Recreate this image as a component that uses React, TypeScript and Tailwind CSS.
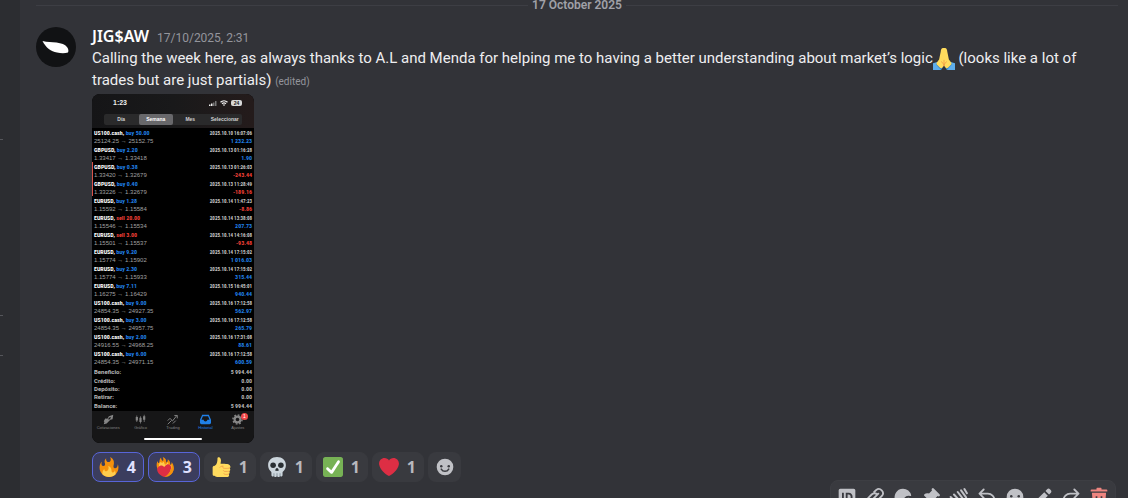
import type { ReactNode } from "react";

type Trade = {
  symbol: string;
  side: "buy" | "sell";
  volume: string;
  time: string;
  open: string;
  close: string;
  profit: string;
  stopped?: boolean;
};

const trades: Trade[] = [
  { symbol: "US100.cash", side: "buy", volume: "50.00", time: "2025.10.10 16:07:06", open: "25124.25", close: "25152.75", profit: "1 232.23" },
  { symbol: "GBPUSD", side: "buy", volume: "2.20", time: "2025.10.13 01:16:28", open: "1.33417", close: "1.33418", profit: "1.90" },
  { symbol: "GBPUSD", side: "buy", volume: "0.38", time: "2025.10.13 01:26:03", open: "1.33420", close: "1.32679", profit: "-243.44", stopped: true },
  { symbol: "GBPUSD", side: "buy", volume: "0.40", time: "2025.10.13 11:28:49", open: "1.33226", close: "1.32679", profit: "-189.16", stopped: true },
  { symbol: "EURUSD", side: "buy", volume: "1.28", time: "2025.10.14 11:47:23", open: "1.15592", close: "1.15584", profit: "-8.86" },
  { symbol: "EURUSD", side: "sell", volume: "20.00", time: "2025.10.14 13:38:08", open: "1.15546", close: "1.15534", profit: "207.73" },
  { symbol: "EURUSD", side: "sell", volume: "3.00", time: "2025.10.14 14:16:08", open: "1.15501", close: "1.15537", profit: "-93.48" },
  { symbol: "EURUSD", side: "buy", volume: "9.20", time: "2025.10.14 17:15:02", open: "1.15774", close: "1.15902", profit: "1 016.03" },
  { symbol: "EURUSD", side: "buy", volume: "2.30", time: "2025.10.14 17:15:02", open: "1.15774", close: "1.15933", profit: "315.44" },
  { symbol: "EURUSD", side: "buy", volume: "7.11", time: "2025.10.15 16:45:01", open: "1.16275", close: "1.16429", profit: "940.44" },
  { symbol: "US100.cash", side: "buy", volume: "9.00", time: "2025.10.16 17:12:58", open: "24854.35", close: "24927.35", profit: "562.97" },
  { symbol: "US100.cash", side: "buy", volume: "3.00", time: "2025.10.16 17:12:58", open: "24854.35", close: "24957.75", profit: "265.79" },
  { symbol: "US100.cash", side: "buy", volume: "2.00", time: "2025.10.16 17:31:08", open: "24916.55", close: "24968.25", profit: "88.61" },
  { symbol: "US100.cash", side: "buy", volume: "6.00", time: "2025.10.16 17:12:58", open: "24854.35", close: "24971.15", profit: "600.59" },
];

const totals = [
  ["Beneficio:", "5 994.44"],
  ["Crédito:", "0.00"],
  ["Depósito:", "0.00"],
  ["Retirar:", "0.00"],
  ["Balance:", "5 994.44"],
];

function Fire() {
  return (
    <svg viewBox="0 0 36 36" className="size-5" aria-hidden="true">
      <path fill="#F4900C" d="M35 19c0-2.062-.367-4.039-1.04-5.868-.46 5.389-3.333 8.157-6.335 6.868-2.812-1.208-.917-5.917-.777-8.164.236-3.809-.012-8.169-6.931-11.794 2.875 5.5.333 8.917-2.333 9.125-2.958.231-5.667-2.542-4.667-7.042-3.238 2.386-3.332 6.402-2.333 9 1.042 2.708-.042 4.958-2.583 5.208-2.84.28-4.418-3.041-2.963-8.333C2.52 10.965 1 14.805 1 19c0 9.389 7.611 17 17 17s17-7.611 17-17z" />
      <path fill="#FFCC4D" d="M28.394 23.999c.148 3.084-2.561 4.293-4.019 3.709-2.106-.843-1.541-2.291-2.083-5.291s-2.625-5.083-5.708-6c2.25 6.333-1.247 8.667-3.08 9.084-1.872.426-3.753-.001-3.968-4.007C7.352 23.668 6 26.676 6 30c0 .368.023.73.055 1.09C9.125 34.124 13.342 36 18 36s8.875-1.876 11.945-4.91c.032-.36.055-.722.055-1.09 0-2.187-.584-4.236-1.606-6.001z" />
    </svg>
  );
}

function HeartOnFire() {
  return (
    <svg viewBox="0 0 36 36" className="size-5" aria-hidden="true">
      <path fill="#F4900C" d="M4 20C2 14 3 10 5 7c0 3 1 4 2 4 2-2 0-6 4-10 0 3 1 5 3 6 2-1 1-4 0-7 5 2 7 6 6 10 3-1 3-4 3-6 4 3 5 6 4 10 2 0 3-2 3-5 4 5 5 11 3 16-2 6-8 10-14 11C11 34 6 28 4 20z" />
      <path fill="#FFCC4D" d="M7 17c0-4 1-6 3-8 2 2 4 2 5-1 2 2 2 4 3 6 3-1 4-3 5-5 2 3 0 5 2 7 2 0 3-1 4-2 2 6-1 13-6 17H14C9 27 7 23 7 17z" />
      <path fill="#DD2E44" d="M29 18c-1-4-5-6-8-4-2 1-3 2-4 4-3-3-7-4-10-1-3 2-4 6-2 10 2 4 7 8 12 9 6-3 12-10 12-18z" />
      <path fill="#F4900C" d="M23 35c5-2 9-6 10-11 1-3 0-6-1-8-1 4-3 6-5 8 1 4-1 8-4 11z" />
    </svg>
  );
}

function ThumbsUp() {
  return (
    <svg viewBox="0 0 36 36" className="size-5" aria-hidden="true">
      <path fill="#FFDB5E" d="M34.956 17.916c0-.503-.12-.975-.321-1.404-1.341-4.326-7.619-4.01-16.549-4.221-1.493-.035-.639-1.798-.115-5.668.341-2.517-1.282-6.382-4.01-6.382-4.498 0-.171 3.548-4.148 12.322-2.125 4.688-6.875 2.062-6.875 6.771v10.719c0 1.833.18 3.595 2.758 3.885C8.195 34.219 7.633 36 11.238 36h18.044c1.838 0 3.333-1.496 3.333-3.334 0-.762-.267-1.456-.698-2.018 1.02-.571 1.72-1.649 1.72-2.899 0-.76-.266-1.454-.696-2.015 1.023-.57 1.725-1.649 1.725-2.901 0-.909-.368-1.733-.961-2.336.757-.611 1.251-1.535 1.251-2.581z" />
      <path fill="none" stroke="#EE9547" strokeWidth="1.3" strokeLinecap="round" d="M34 19c-1 1-2 1.500-4 1.500h-5.500c-3 0-4-1.500-3-4M33 25.200c-1 .7-2 .8-3.500.8H25c-1.500 0-2.300-.6-2.600-1.600M31.500 30.700c-.8.5-1.600.6-2.500.6h-3.500c-1.300 0-2-.5-2.300-1.300M21 16.500c-2 0-4 .500-5 2" />
    </svg>
  );
}

function Skull() {
  return (
    <svg viewBox="0 0 36 36" className="size-5" aria-hidden="true">
      <path fill="#CCD6DD" d="M18 0C8.500 0 2 6 2 14.500c0 4 1.200 7 3 9.500 1.500 2 3 2.500 3 4.500v4c0 1.700 1 2.700 2.300 2.700s2-1 2.200-1c.4.800 1.200 1.800 2.700 1.800s2.200-1 2.800-1.800c.6.800 1.300 1.800 2.800 1.800s2.300-1 2.700-1.800c.2 0 .9 1 2.200 1s2.300-1 2.300-2.700v-4c0-2 1.500-2.500 3-4.500 1.800-2.500 3-5.500 3-9.500C34 6 27.500 0 18 0z" />
      <g fill="#292F33">
        <circle cx="11" cy="15" r="5" />
        <circle cx="25" cy="15" r="5" />
        <path d="M18 20c-1.500 0-3 2.500-3 3.700 0 1 .8 1.300 1.500 1.300.8 0 1-.4 1.500-.4s.7.400 1.500.4c.7 0 1.500-.3 1.500-1.300C21 22.500 19.500 20 18 20z" />
      </g>
      <path stroke="#66757F" strokeWidth="1.200" strokeLinecap="round" d="M12.500 30v4M18 30v4M23.500 30v4" />
    </svg>
  );
}

function CheckBox() {
  return (
    <svg viewBox="0 0 36 36" className="size-5" aria-hidden="true">
      <path fill="#77B255" d="M36 32c0 2.209-1.791 4-4 4H4c-2.209 0-4-1.791-4-4V4c0-2.209 1.791-4 4-4h28c2.209 0 4 1.791 4 4v28z" />
      <path fill="#FFF" d="M29.28 6.362c-1.156-.751-2.704-.422-3.458.736L14.936 23.877l-5.029-4.65c-1.014-.938-2.596-.875-3.533.138-.937 1.014-.875 2.596.139 3.533l7.209 6.666c.48.445 1.09.665 1.696.665.673 0 1.534-.282 2.099-1.139.332-.506 12.5-19.27 12.5-19.27.751-1.159.421-2.707-.737-3.458z" />
    </svg>
  );
}

function Heart() {
  return (
    <svg viewBox="0 0 36 36" className="size-5" aria-hidden="true">
      <path fill="#DD2E44" d="M35.885 11.833c0-5.45-4.418-9.868-9.867-9.868-3.308 0-6.227 1.633-8.018 4.129-1.791-2.496-4.71-4.129-8.017-4.129-5.45 0-9.868 4.417-9.868 9.868 0 .772.098 1.52.266 2.241C1.751 22.587 11.216 31.568 18 34.034c6.783-2.466 16.249-11.447 17.617-19.959.17-.721.268-1.469.268-2.242z" />
    </svg>
  );
}

function FoldedHands() {
  return (
    <svg viewBox="0 0 36 36" className="-my-1 inline-block size-[22px] align-middle" role="img" aria-label="Folded hands">
      <path fill="#5DADEC" d="M0 25l7-2 8 8-2 5H0zM36 25l-7-2-8 8 2 5h13z" />
      <path fill="#3B88C3" d="M7 23l9 9-3 4-8-9zM29 23l-9 9 3 4 8-9z" />
      <path fill="#FFDC5D" d="M16.500 0C13.500 0 13 3 12.600 6L10 19l-4 5c-.8 1.500 0 3 1 4l4.500 4.500c1.500 1 3 1 4-.500L18 29l2.500 3c1 1.500 2.500 1.500 4 .500L29 28c1-1 1.800-2.500 1-4l-4-5-2.600-13C23 3 22.500 0 19.500 0z" />
      <path fill="none" stroke="#EF9645" strokeWidth="1.200" strokeLinecap="round" d="M18 20v9M14 22.500c1.500 1 3 3 4 6.500 1-3.500 2.500-5.500 4-6.500" />
    </svg>
  );
}

function Smiley() {
  return (
    <svg viewBox="0 0 24 24" className="size-5" aria-hidden="true">
      <circle cx="12" cy="12" r="10" fill="currentColor" />
      <g className="text-[#393a3f]">
        <circle cx="7.500" cy="11" r="1.500" fill="currentColor" />
        <circle cx="16.500" cy="11" r="1.500" fill="currentColor" />
        <path d="M7.500 14.500c2 3.600 7 3.600 9 0" fill="none" stroke="currentColor" strokeWidth="1.800" strokeLinecap="round" />
      </g>
    </svg>
  );
}

const reactions = [
  { label: "Fire", count: 4, mine: true, icon: <Fire /> },
  { label: "Heart on fire", count: 3, mine: true, icon: <HeartOnFire /> },
  { label: "Thumbs up", count: 1, mine: false, icon: <ThumbsUp /> },
  { label: "Skull", count: 1, mine: false, icon: <Skull /> },
  { label: "Check mark", count: 1, mine: false, icon: <CheckBox /> },
  { label: "Heart", count: 1, mine: false, icon: <Heart /> },
];

function Glyph({ children }: { children: ReactNode }) {
  return (
    <svg viewBox="0 0 24 24" className="size-5" fill="currentColor" aria-hidden="true">
      {children}
    </svg>
  );
}

const actions = [
  {
    label: "Copy message ID",
    icon: (
      <Glyph>
        <path fillRule="evenodd" d="M4 2h16a2 2 0 0 1 2 2v16a2 2 0 0 1-2 2H4a2 2 0 0 1-2-2V4a2 2 0 0 1 2-2ZM6 7v10h2.200V7H6Zm4.500 0v10H14c3 0 4.700-2 4.700-5S17 7 14 7h-3.500Zm2.200 2h1.200c1.700 0 2.500 1.100 2.500 3s-.8 3-2.500 3h-1.200V9Z" />
      </Glyph>
    ),
  },
  {
    label: "Copy link",
    icon: (
      <Glyph>
        <path fill="none" stroke="currentColor" strokeWidth="2.200" strokeLinecap="round" d="M9 15l7-7M11 6l2.500-2.500a5 5 0 0 1 7 7L16 15a5 5 0 0 1-6 .8M13 18l-2.500 2.500a5 5 0 0 1-7-7L8 9a5 5 0 0 1 6-.8" />
      </Glyph>
    ),
  },
  {
    label: "Mark unread",
    icon: (
      <Glyph>
        <path d="M12 2a10 10 0 0 1 9.800 8c.1.600-.3 1-.9.900a7 7 0 0 0-8.300 9.900c.3.600-.1 1.200-.8 1.200H3.200c-.8 0-1.300-.7-1-1.500l1.300-3.200A10 10 0 0 1 12 2Z" />
        <circle cx="18.500" cy="17.500" r="4.500" />
      </Glyph>
    ),
  },
  {
    label: "Pin message",
    icon: (
      <Glyph>
        <path d="M13.200 1.800a1.500 1.500 0 0 1 2.100 0l6.900 6.900a1.500 1.500 0 0 1-1.600 2.500l-.7-.3-3.600 3.600c.6 2.300.2 4.300-1.200 5.700a1 1 0 0 1-1.400 0l-3.900-3.900-5.400 5.400a1.400 1.400 0 0 1-2-2l5.400-5.400-3.900-3.900a1 1 0 0 1 0-1.400c1.400-1.400 3.400-1.800 5.700-1.200l3.600-3.600-.3-.7a1.500 1.500 0 0 1 .3-1.700Z" />
      </Glyph>
    ),
  },
  {
    label: "Apps",
    icon: (
      <Glyph>
        <path fill="none" stroke="currentColor" strokeWidth="2.400" strokeLinecap="round" d="M2 12l9 9M6 9l9 10M10.500 6l8 10.500M14.500 4l6 8.500M18.500 2.500l3 5" />
      </Glyph>
    ),
  },
  {
    label: "Reply",
    icon: (
      <Glyph>
        <path fill="none" stroke="currentColor" strokeWidth="2.200" strokeLinecap="round" strokeLinejoin="round" d="M8 3L3 8l5 5M3.500 8H13a8 8 0 0 1 8 8v4" />
      </Glyph>
    ),
  },
  { label: "React to message", icon: <Smiley /> },
  {
    label: "Edit",
    icon: (
      <Glyph>
        <path d="M13.500 6.200l4.300 4.300L8 20.300c-.3.300-.7.500-1.200.6L3 21.900a.8.800 0 0 1-.9-.9l1-3.800c.1-.5.3-.9.6-1.200l9.800-9.800ZM15 4.700l1.900-1.900a2.500 2.500 0 0 1 3.500 0l.8.800a2.500 2.500 0 0 1 0 3.500L19.300 9 15 4.700Z" />
      </Glyph>
    ),
  },
  {
    label: "Forward",
    icon: (
      <Glyph>
        <path fill="none" stroke="currentColor" strokeWidth="2.200" strokeLinecap="round" strokeLinejoin="round" d="M16 3l5 5-5 5M20.500 8H11a8 8 0 0 0-8 8v4" />
      </Glyph>
    ),
  },
  {
    label: "Delete",
    danger: true,
    icon: (
      <Glyph>
        <path d="M14.300 1c.4 0 .7.300.7.700V3h6a1 1 0 0 1 1 1v1.500H2V4a1 1 0 0 1 1-1h6V1.700c0-.4.300-.7.700-.7h4.600Z" />
        <path fillRule="evenodd" d="M3.500 7h17l-1.100 13.200A3 3 0 0 1 16.400 23H7.600a3 3 0 0 1-3-2.800L3.500 7ZM8 11v8h2v-8H8Zm6 0v8h2v-8h-2Z" />
      </Glyph>
    ),
  },
];

const phoneTabs = [
  {
    label: "Cotizaciones",
    icon: <path fill="currentColor" d="M1 10l2-4 3 .5L8 3l6-2-1 6-3 1-2 2-3 3-4 1 1-3zM8 5l-1 2.500L9.500 7 11 4z" fillRule="evenodd" />,
  },
  {
    label: "Gráfico",
    icon: (
      <g fill="currentColor">
        <path d="M1 4h3v5H1zM6 5h3v6H6zM11 3h3v5h-3z" />
        <path d="M2 2h1v9H2zM7 3h1v10H7zM12 1h1v10h-1z" />
      </g>
    ),
  },
  {
    label: "Trading",
    icon: <path fill="none" stroke="currentColor" strokeWidth="1.300" d="M1 14l5-5M5 7l2.500 2.500L13.500 2M10 2h4v4M1 9l3-3 1.500 1.500M8 13l4-4" />,
  },
  {
    label: "Historial",
    active: true,
    icon: (
      <path fill="currentColor" fillRule="evenodd" d="M3 1h9l3 7v4a2 2 0 0 1-2 2H2a2 2 0 0 1-2-2V8l3-7zM4 3L2 8h3c0 3 5 3 5 0h3l-2-5z" />
    ),
  },
  {
    label: "Ajustes",
    badge: "1",
    icon: (
      <g>
        <circle cx="7.500" cy="7.500" r="4" fill="none" stroke="currentColor" strokeWidth="3" />
        <circle cx="7.500" cy="7.500" r="6.200" fill="none" stroke="currentColor" strokeWidth="2" strokeDasharray="2.400 2.400" />
      </g>
    ),
  },
];

function PhoneScreenshot() {
  return (
    <div className="flex w-[162px] flex-col overflow-hidden rounded-lg bg-black font-['Liberation_Sans',sans-serif]">
      <div className="bg-linear-to-r from-[#151517] via-[#19191a] to-[#241b1b] px-3 pb-[3px]">
        <div className="flex h-[18px] items-center justify-between pl-[9px] text-[7px] font-bold text-[#eeeeee]">
          <span>1:23</span>
          <div className="flex items-center gap-[3px]">
            <svg viewBox="0 0 16 10" className="h-[5px] w-2" aria-hidden="true">
              <path fill="#eee" d="M0 7h3v3H0zM4 5h3v5H4z" />
              <path fill="#777" d="M8 3h3v7H8zM12 0h3v10h-3z" />
            </svg>
            <svg viewBox="0 0 16 12" className="h-[6px] w-2" aria-hidden="true">
              <path fill="none" stroke="#eee" strokeWidth="2.400" d="M1 4.500c4-4 10-4 14 0M4 7.500c2.500-2 5.500-2 8 0" />
              <path fill="#eee" d="M8 12L5.500 9.500c1.500-1 3.500-1 5 0z" />
            </svg>
            <span className="flex h-[6px] w-[11px] items-center justify-center rounded-xs bg-[#d8d8d8] text-[5px] leading-none text-[#222222]">24</span>
          </div>
        </div>
        <div className="mt-[2px] grid h-[11px] grid-cols-4 rounded-xs bg-[#2a2a2b] text-[5px] font-bold text-[#d0d0d0]">
          <button type="button" className="leading-none">Día</button>
          <button type="button" className="rounded-xs bg-[#68686b] leading-none text-white">Semana</button>
          <button type="button" className="leading-none">Mes</button>
          <button type="button" className="leading-none">Seleccionar</button>
        </div>
      </div>
      <ul>
        {trades.map((t, i) => (
          <li
            key={i}
            className={
              t.stopped
                ? "border-l border-[#d9534a] pr-[2px] text-[6px] leading-[8px]"
                : "border-l border-black pr-[2px] text-[6px] leading-[8px]"
            }
          >
            <div className="flex h-[9px] items-center justify-between pl-px font-['Roboto_Condensed',Roboto,sans-serif] font-bold">
              <span className="text-white">
                {t.symbol}, <span className={t.side === "buy" ? "text-[#2080e8]" : "text-[#f04038]"}>{t.side} {t.volume}</span>
              </span>
              <time className="text-[5px] text-[#c8c8c8]">{t.time}</time>
            </div>
            <div className="flex h-2 items-center justify-between pl-px">
              <span className="text-[#a0a0a0]">{t.open} → {t.close}</span>
              <span className={t.profit.startsWith("-") ? "font-['Roboto_Condensed',Roboto,sans-serif] font-bold text-[#f04038]" : "font-['Roboto_Condensed',Roboto,sans-serif] font-bold text-[#2080e8]"}>
                {t.profit}
              </span>
            </div>
          </li>
        ))}
      </ul>
      <dl className="flex h-[45px] flex-col px-[2px] pt-[2px] pb-px font-['Roboto',sans-serif] text-[6px] leading-[8px] font-bold text-[#b8b8b8]">
        {totals.map(([label, value]) => (
          <div key={label} className="flex flex-1 items-center justify-between">
            <dt>{label}</dt>
            <dd className="font-['Roboto_Condensed',Roboto,sans-serif]">{value}</dd>
          </div>
        ))}
      </dl>
      <div className="bg-[#161617] py-[3px]">
        <div className="grid grid-cols-5">
          {phoneTabs.map((tab) => (
            <button
              key={tab.label}
              type="button"
              className={
                tab.active
                  ? "relative flex flex-col items-center text-[4px] leading-[5px] text-[#2080e8]"
                  : "relative flex flex-col items-center text-[4px] leading-[5px] text-[#858585]"
              }
            >
              <svg viewBox="0 0 15 15" className="size-[11px]" aria-hidden="true">{tab.icon}</svg>
              <span>{tab.label}</span>
              {tab.badge && (
                <span className="absolute -top-px right-[6px] flex size-[7px] items-center justify-center rounded-full bg-[#f04848] text-[5px] leading-none text-white">
                  {tab.badge}
                </span>
              )}
            </button>
          ))}
        </div>
        <div className="mx-auto mt-2 h-[2px] w-[58px] rounded-full bg-white" />
      </div>
    </div>
  );
}

export default function App() {
  return (
    <div className="relative flex h-screen overflow-hidden bg-[#323338] font-['Noto_Sans','Open_Sans',sans-serif]">
      <aside className="flex w-5 shrink-0 flex-col bg-[#2c2d31]">
        <span className="mt-[139px] h-px w-[3px] bg-[#55565b]" />
        <span className="mt-[175px] h-px w-[3px] bg-[#55565b]" />
        <span className="mt-[39px] h-px w-[3px] bg-[#55565b]" />
      </aside>
      <main className="min-w-0 flex-1 pr-[10px] pl-4">
        <div className="flex h-[11px] items-center">
          <span className="h-px flex-1 bg-[#3d3e44]" />
          <time className="px-1 font-['Roboto',sans-serif] text-xs leading-[11px] font-semibold text-[#a0a1a8]">17 October 2025</time>
          <span className="h-px flex-1 bg-[#3d3e44]" />
        </div>
        <article className="mt-[14px] flex gap-4">
          <svg viewBox="0 0 40 40" className="mt-[2px] size-10 shrink-0" role="img" aria-label="JIG$AW avatar">
            <circle cx="20" cy="20" r="20" fill="#111214" />
            <path fill="#fff" d="M6.500 14c5 1.200 9 .8 14 1.500 5 .7 8.500 2 10.500 4.500 1.500 2 1.800 4 1 5.500-3 .9-7 .9-11 0-6-1.200-11-4.500-14.500-11.500z" />
          </svg>
          <div className="min-w-0 flex-1">
            <header className="flex h-[22px] items-baseline gap-2">
              <h2 className="text-base leading-[22px] font-semibold text-white">JIG$AW</h2>
              <time className="font-['Roboto',sans-serif] text-xs leading-[22px] text-[#94959c]">17/10/2025, 2:31</time>
            </header>
            <p className="pr-4 font-['Roboto','Noto_Sans',sans-serif] text-[15px] leading-[22px] text-[#eeeef0]">
              Calling the week here, as always thanks to A.L and Menda for helping me to having a better understanding about market’s logic
              <FoldedHands /> (looks like a lot of trades but are just partials) <span className="text-[10px] leading-none text-[#94959c]">(edited)</span>
            </p>
            <div className="mt-[3px]">
              <PhoneScreenshot />
            </div>
            <div className="mt-[9px] flex flex-wrap gap-1">
              {reactions.map((r) => (
                <button
                  key={r.label}
                  type="button"
                  aria-label={r.label}
                  aria-pressed={r.mine}
                  className={
                    r.mine
                      ? "flex h-[30px] w-[52px] items-center justify-between rounded-lg border border-[#5865d8] bg-[#3b3d5e] pr-[7px] pl-[6px] text-base font-bold text-[#dfe0ff]"
                      : "flex h-[30px] w-[52px] items-center justify-between rounded-lg border border-[#393a3f] bg-[#393a3f] pr-[7px] pl-[6px] text-base font-bold text-[#b8b9be]"
                  }
                >
                  {r.icon}
                  <span>{r.count}</span>
                </button>
              ))}
              <button type="button" aria-label="Add reaction" className="flex h-[30px] w-[33px] items-center justify-center rounded-lg bg-[#393a3f] text-[#c0c1c6]">
                <Smiley />
              </button>
            </div>
          </div>
        </article>
      </main>
      <div className="absolute right-3 -bottom-4 flex h-[34px] items-center gap-2 rounded-lg border border-[#3d3e43] bg-[#393a3f] px-[6px]">
        {actions.map((a) => (
          <button
            key={a.label}
            type="button"
            aria-label={a.label}
            className={a.danger ? "text-[#ee8580]" : "text-[#c0c1c6]"}
          >
            {a.icon}
          </button>
        ))}
      </div>
    </div>
  );
}
